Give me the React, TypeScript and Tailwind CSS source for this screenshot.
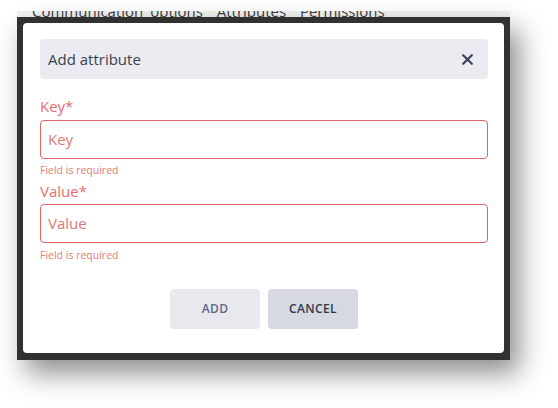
import React from "react";

export default function App() {
  return (
    <div className="w-[558px] h-[408px] bg-white overflow-hidden font-['Open_Sans',sans-serif]">
      <div className="ml-[17px] w-[493px]">
        <div className="h-[11px]" />
        <div className="h-[6px] overflow-hidden bg-[#f3f3f3] pl-[15px]">
          <div className="-mt-[9px] text-[15px] leading-[18px] text-[#3a3a3a] whitespace-nowrap [word-spacing:3px]">
            Communication options&nbsp;&nbsp;Attributes&nbsp;&nbsp;Permissions
          </div>
        </div>
        <div className="bg-[#313131] px-[6px] pt-[6px] pb-[7px] shadow-[9px_13px_26px_rgba(0,0,0,0.45)]">
          <div className="bg-white rounded-[4px] h-[330px] pl-[17px] pr-[16px] pt-[16px]">
            <div className="h-[40px] rounded-[4px] bg-[#ebecf2] flex items-center justify-between pl-[8px] pr-[15px]">
              <span className="text-[15px] text-[#3b3e4b]">Add attribute</span>
              <svg width="11" height="11" viewBox="0 0 11 11" fill="none">
                <path d="M1.2 1.2L9.8 9.8M9.8 1.2L1.2 9.8" stroke="#3d4257" strokeWidth="2.2" strokeLinecap="round" />
              </svg>
            </div>

            <div className="mt-[18px] text-[15px] leading-[18px] text-[#e27070]">Key*</div>
            <div className="mt-[5px] h-[39px] rounded-[4px] border border-[#dc6464] flex items-center pl-[7px]">
              <span className="text-[15px] text-[#e07777]">Key</span>
            </div>
            <div className="mt-[5px] text-[10.5px] leading-[13px] text-[#e67a7a]">Field is required</div>

            <div className="mt-[5px] text-[15px] leading-[18px] text-[#e27070]">Value*</div>
            <div className="mt-[4px] h-[39px] rounded-[4px] border border-[#dc6464] flex items-center pl-[7px]">
              <span className="text-[15px] text-[#e07777]">Value</span>
            </div>
            <div className="mt-[6px] text-[10.5px] leading-[13px] text-[#e67a7a]">Field is required</div>

            <div className="mt-[27px] flex justify-center gap-[8px]">
              <button className="w-[90px] h-[40px] rounded-[4px] bg-[#e8e9ef] text-[12px] font-semibold tracking-[0.03em] text-[#5e6686]">
                ADD
              </button>
              <button className="w-[90px] h-[40px] rounded-[4px] bg-[#d6d9e2] text-[12px] font-semibold tracking-[0.03em] text-[#33364a]">
                CANCEL
              </button>
            </div>
          </div>
        </div>
      </div>
    </div>
  );
}
